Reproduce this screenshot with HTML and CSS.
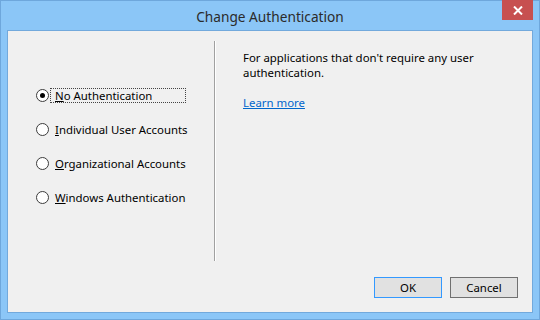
FILE: index.html
```html
<!DOCTYPE html>
<html>
<head>
<meta charset="utf-8">
<link rel="stylesheet" href="styles.css">
</head>
<body>
<div class="window">
  <div class="titlebar">
    <div class="title">Change Authentication</div>
    <div class="close">
      <svg width="10" height="9" viewBox="0 0 10 9"><path d="M1 0.5 L9 8.5 M9 0.5 L1 8.5" stroke="#fff" stroke-width="2"/></svg>
    </div>
  </div>
  <div class="client">
    <div class="main">
      <div class="options">
        <div class="option">
          <span class="radio checked"></span>
          <span class="label focus"><u>N</u>o Authentication</span>
        </div>
        <div class="option">
          <span class="radio"></span>
          <span class="label"><u>I</u>ndividual User Accounts</span>
        </div>
        <div class="option">
          <span class="radio"></span>
          <span class="label"><u>O</u>rganizational Accounts</span>
        </div>
        <div class="option">
          <span class="radio"></span>
          <span class="label"><u>W</u>indows Authentication</span>
        </div>
      </div>
      <div class="divider"></div>
      <div class="details">
        <p class="desc">For applications that don't require any user authentication.</p>
        <a class="link" href="#">Learn more</a>
      </div>
    </div>
    <div class="buttons">
      <button class="btn default">OK</button>
      <button class="btn">Cancel</button>
    </div>
  </div>
</div>
</body>
</html>
```
FILE: styles.css
```css
html, body {
  margin: 0;
  padding: 0;
}
body {
  width: 540px;
  height: 320px;
  overflow: hidden;
  font-family: "Noto Sans", "Open Sans", sans-serif;
  font-size: 11.4px;
  color: #000;
}
.window {
  box-sizing: border-box;
  width: 540px;
  height: 320px;
  background: #8bc6f7;
  border: 1px solid #6ea7dc;
  display: flex;
  flex-direction: column;
}
.titlebar {
  height: 29px;
  display: flex;
  align-items: center;
  justify-content: center;
  position: relative;
}
.title {
  font-size: 13.7px;
  color: #2b2b2b;
  margin-top: 1px;
}
.close {
  position: absolute;
  top: -1px;
  right: 6px;
  width: 31px;
  height: 20px;
  background: #c75050;
  display: flex;
  align-items: center;
  justify-content: center;
}
.client {
  flex: 1;
  margin: 0 6px 6px 6px;
  border: 1px solid #72a9dc;
  background: #f0f0f0;
  display: flex;
  flex-direction: column;
}
.main {
  display: flex;
  padding-top: 10px;
  height: 220px;
}
.options {
  width: 206px;
  display: flex;
  flex-direction: column;
  gap: 18px;
  padding-top: 46px;
  box-sizing: border-box;
  padding-left: 28px;
}
.option {
  display: flex;
  align-items: center;
  height: 16px;
}
.radio {
  width: 11px;
  height: 11px;
  border: 1px solid #3c3c3c;
  border-radius: 50%;
  background: #fff;
  box-sizing: content-box;
  position: relative;
  flex: none;
}
.radio.checked::after {
  content: "";
  position: absolute;
  left: 3px;
  top: 3px;
  width: 5px;
  height: 5px;
  border-radius: 50%;
  background: #000;
}
.label {
  margin-left: 1px;
  padding: 0 4px;
  line-height: 13px;
  border: 1px dotted transparent;
  white-space: nowrap;
}
.label.focus {
  border-color: #444;
  width: 126px;
}
.divider {
  width: 1px;
  background: #a0a0a0;
  border-right: 1px solid #fff;
}
.details {
  padding-left: 27px;
  padding-top: 9px;
  width: 250px;
}
.desc {
  margin: 0;
  line-height: 15px;
}
.link {
  display: inline-block;
  margin-top: 15px;
  color: #0066cc;
  text-decoration: underline;
  line-height: 15px;
}
.buttons {
  margin-top: auto;
  display: flex;
  justify-content: flex-end;
  gap: 8px;
  padding: 0 14px 14px 0;
}
.btn {
  width: 68px;
  height: 21px;
  box-sizing: border-box;
  background: #e1e1e1;
  border: 1px solid #707070;
  font-family: inherit;
  font-size: 11.4px;
  color: #000;
  padding: 0;
}
.btn.default {
  border-color: #3399ff;
}
```
